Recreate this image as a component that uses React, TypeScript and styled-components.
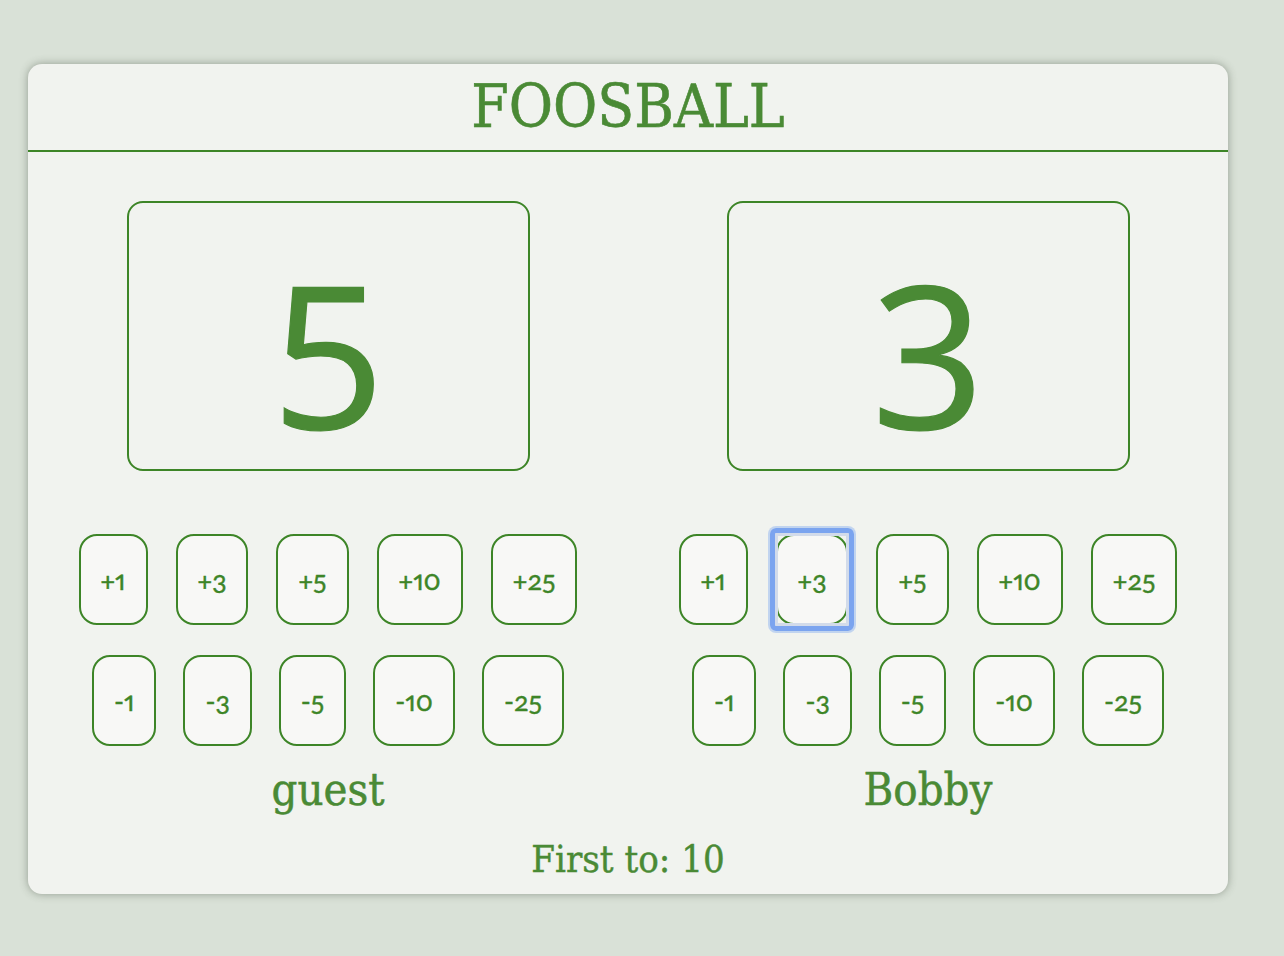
import React from "react";
import styled, { createGlobalStyle } from "styled-components";

const GREEN = "#4a8a35";
const LINE = "#3d8527";
const SLAB = '"DejaVu Serif Condensed", "DejaVu Serif", serif';
const SANS = 'Lato, "Open Sans", sans-serif';

const GlobalStyle = createGlobalStyle`
  html, body {
    margin: 0;
    padding: 0;
    background: #d9e1d7;
    min-height: 100%;
  }
  body {
    min-height: 956px;
    font-family: ${SLAB};
  }
`;

const Page = styled.div`
  padding: 64px 0 0 28px;
`;

const Card = styled.div`
  width: 1200px;
  background: #f1f3ef;
  border-radius: 14px;
  box-shadow: 0 0 9px rgba(60, 70, 55, 0.45);
  display: flex;
  flex-direction: column;
  padding-bottom: 15px;
`;

const Header = styled.header`
  height: 86px;
  border-bottom: 2px solid ${LINE};
  display: flex;
  justify-content: center;
`;

const Title = styled.h1`
  margin: 0;
  font-family: ${SLAB};
  font-weight: normal;
  font-size: 60px;
  line-height: 84px;
  color: ${GREEN};
  -webkit-text-stroke: 0.6px ${GREEN};
`;

const Players = styled.div`
  display: grid;
  grid-template-columns: 1fr 1fr;
`;

const Player = styled.section`
  display: flex;
  flex-direction: column;
  align-items: center;
`;

const ScoreBox = styled.div`
  box-sizing: border-box;
  width: 403px;
  height: 270px;
  margin-top: 49px;
  border: 2px solid ${LINE};
  border-radius: 16px;
  display: flex;
  justify-content: center;
  align-items: center;
  padding-top: 32px;
`;

const Score = styled.span`
  font-family: "Open Sans", sans-serif;
  font-size: 198px;
  line-height: 1;
  color: ${GREEN};
  -webkit-text-stroke: 1.2px ${GREEN};
`;

const ButtonRow = styled.div<{ $top: number; $gap: number }>`
  display: flex;
  justify-content: center;
  gap: ${(p) => p.$gap}px;
  margin-top: ${(p) => p.$top}px;
`;

const StepButton = styled.button<{ $focused?: boolean }>`
  position: relative;
  box-sizing: border-box;
  height: 91px;
  padding: 0 20px;
  border: 2px solid ${LINE};
  border-radius: 18px;
  background: #f8f8f6;
  color: ${LINE};
  font-family: ${SANS};
  font-size: 27px;
  font-variant-numeric: oldstyle-nums proportional-nums;
  -webkit-text-stroke: 0.4px ${LINE};
  cursor: pointer;
  outline: none;

  &::after {
    content: "";
    display: ${(p) => (p.$focused ? "block" : "none")};
    position: absolute;
    inset: -8px;
    border: 5px solid #7ba4ef;
    border-radius: 6px;
    box-shadow: 0 0 0 2px rgba(123, 164, 239, 0.4),
      inset 0 0 0 3px #d2dbea;
    pointer-events: none;
  }
`;

const Name = styled.div`
  margin-top: 20px;
  font-family: ${SLAB};
  font-size: 45px;
  line-height: 48px;
  color: ${GREEN};
  -webkit-text-stroke: 0.5px ${GREEN};
`;

const Footer = styled.div`
  margin-top: 25px;
  text-align: center;
  font-family: ${SLAB};
  font-size: 38px;
  line-height: 40px;
  color: ${GREEN};
  -webkit-text-stroke: 0.4px ${GREEN};
`;

const steps = [1, 3, 5, 10, 25];

type PlayerData = { name: string; score: number; focus?: number };

const players: PlayerData[] = [
  { name: "guest", score: 5 },
  { name: "Bobby", score: 3, focus: 3 },
];

export default function App() {
  return (
    <>
      <GlobalStyle />
      <Page>
        <Card>
          <Header>
            <Title>FOOSBALL</Title>
          </Header>
          <Players>
            {players.map((p) => (
              <Player key={p.name}>
                <ScoreBox>
                  <Score>{p.score}</Score>
                </ScoreBox>
                <ButtonRow $top={63} $gap={28}>
                  {steps.map((n) => (
                    <StepButton key={n} $focused={p.focus === n}>
                      +{n}
                    </StepButton>
                  ))}
                </ButtonRow>
                <ButtonRow $top={30} $gap={27}>
                  {steps.map((n) => (
                    <StepButton key={n}>-{n}</StepButton>
                  ))}
                </ButtonRow>
                <Name>{p.name}</Name>
              </Player>
            ))}
          </Players>
          <Footer>First to: 10</Footer>
        </Card>
      </Page>
    </>
  );
}
